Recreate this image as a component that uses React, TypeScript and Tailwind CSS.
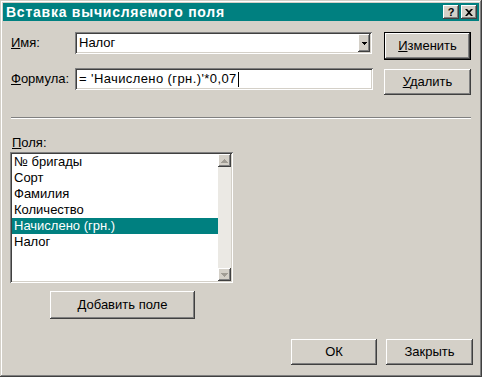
const raised =
  "shadow-[inset_-1px_-1px_#404040,inset_1px_1px_#ffffff,inset_-2px_-2px_#808080,inset_2px_2px_#d4d0c8]";
const sunken =
  "shadow-[inset_1px_1px_#808080,inset_-1px_-1px_#ffffff,inset_2px_2px_#404040,inset_-2px_-2px_#d4d0c8]";

const fields = ["№ бригады", "Сорт", "Фамилия", "Количество", "Начислено (грн.)", "Налог"];

function Btn({ children, className = "" }: { children: React.ReactNode; className?: string }) {
  return (
    <div className={`flex items-center justify-center bg-[#d4d0c8] ${raised} ${className}`}>
      {children}
    </div>
  );
}

function Arrow({ up }: { up?: boolean }) {
  return (
    <svg width="7" height="4" viewBox="0 0 7 4" className="block">
      {up ? (
        <path d="M3 0h1v1h1v1h1v1h1v1H0V3h1V2h1V1h1z" fill="#a09c94" />
      ) : (
        <path d="M0 0h7v1H6v1H5v1H4v1H3V3H2V2H1V1H0z" fill="#a09c94" />
      )}
    </svg>
  );
}

export default function App() {
  return (
    <div
      className="w-[482px] h-[377px] bg-[#d4d0c8] p-[3px] flex flex-col text-[13px] text-black shadow-[inset_-1px_-1px_#404040,inset_1px_1px_#d4d0c8,inset_-2px_-2px_#808080,inset_2px_2px_#ffffff]"
      style={{ fontFamily: '"Liberation Sans", Arial, sans-serif' }}
    >
      {/* title bar */}
      <div className="h-[18px] bg-[#008080] flex items-center pl-[3px] pr-[2px]">
        <span className="text-white font-bold text-[14px] leading-none tracking-[0.75px]">
          Вставка вычисляемого поля
        </span>
        <div className="ml-auto flex gap-[2px]">
          <Btn className="w-[16px] h-[14px] font-bold text-[11px] leading-none">?</Btn>
          <Btn className="w-[16px] h-[14px]">
            <svg width="8" height="7" viewBox="0 0 8 7" className="block">
              <path d="M0 0h2l2 2 2-2h2L5 3.5 8 7H6L4 5 2 7H0l3-3.5z" fill="#000" />
            </svg>
          </Btn>
        </div>
      </div>

      {/* name row */}
      <div className="mt-[11px] flex items-start">
        <div className="w-[72px] pl-[8px] h-[22px] flex items-center">
          <span>
            <u>И</u>мя:
          </span>
        </div>
        <div className={`w-[297px] h-[22px] bg-white p-[2px] flex ${sunken}`}>
          <div className="flex-1 pl-[2px] flex items-center">Налог</div>
          <Btn className="w-[12px] h-full">
            <svg width="5" height="3" viewBox="0 0 5 3" className="block">
              <path d="M0 0h5v1H4v1H3v1H2V2H1V1H0z" fill="#000" />
            </svg>
          </Btn>
        </div>
        <div className="ml-[12px] w-[87px] h-[28px] border border-black">
          <Btn className="w-full h-full">
            <span>
              <u>И</u>зменить
            </span>
          </Btn>
        </div>
      </div>

      {/* formula row */}
      <div className="mt-[8px] flex items-start">
        <div className="w-[72px] pl-[8px] h-[22px] flex items-center">
          <span>
            <u>Ф</u>ормула:
          </span>
        </div>
        <div className={`w-[298px] h-[22px] bg-white px-[4px] flex items-center ${sunken}`}>
          <span className="tracking-[0.4px]">= 'Начислено (грн.)'*0,07</span>
          <span className="w-[1px] h-[15px] bg-black ml-[1px]" />
        </div>
        <Btn className="ml-[11px] mt-[1px] w-[87px] h-[26px]">
          <span>
            <u>У</u>далить
          </span>
        </Btn>
      </div>

      {/* separator */}
      <div className="mt-[22px] ml-[8px] w-[460px] h-[2px] border-t border-t-[#808080] border-b border-b-white" />

      {/* fields */}
      <div className="mt-[17px] ml-[9px] h-[14px] leading-[14px]">
        <u>П</u>оля:
      </div>
      <div className={`mt-[2px] ml-[7px] w-[223px] h-[131px] bg-white p-[2px] flex ${sunken}`}>
        <div className="flex-1 flex flex-col">
          {fields.map((f, i) => (
            <div
              key={f}
              className={`h-[16px] leading-[16px] pl-[2px] ${
                i === 4 ? "bg-[#008080] text-white" : ""
              }`}
            >
              {f}
            </div>
          ))}
        </div>
        <div className="w-[13px] flex flex-col bg-[#ebe9e4]">
          <Btn className="w-full h-[13px]">
            <Arrow up />
          </Btn>
          <div className="flex-1" />
          <Btn className="w-full h-[13px]">
            <Arrow />
          </Btn>
        </div>
      </div>

      <Btn className="mt-[8px] ml-[47px] w-[145px] h-[28px]">Добавить поле</Btn>

      {/* bottom buttons */}
      <div className="mt-[20px] flex justify-end gap-[9px] pr-[6px]">
        <Btn className="w-[86px] h-[26px]">ОК</Btn>
        <Btn className="w-[87px] h-[26px]">Закрыть</Btn>
      </div>
    </div>
  );
}
